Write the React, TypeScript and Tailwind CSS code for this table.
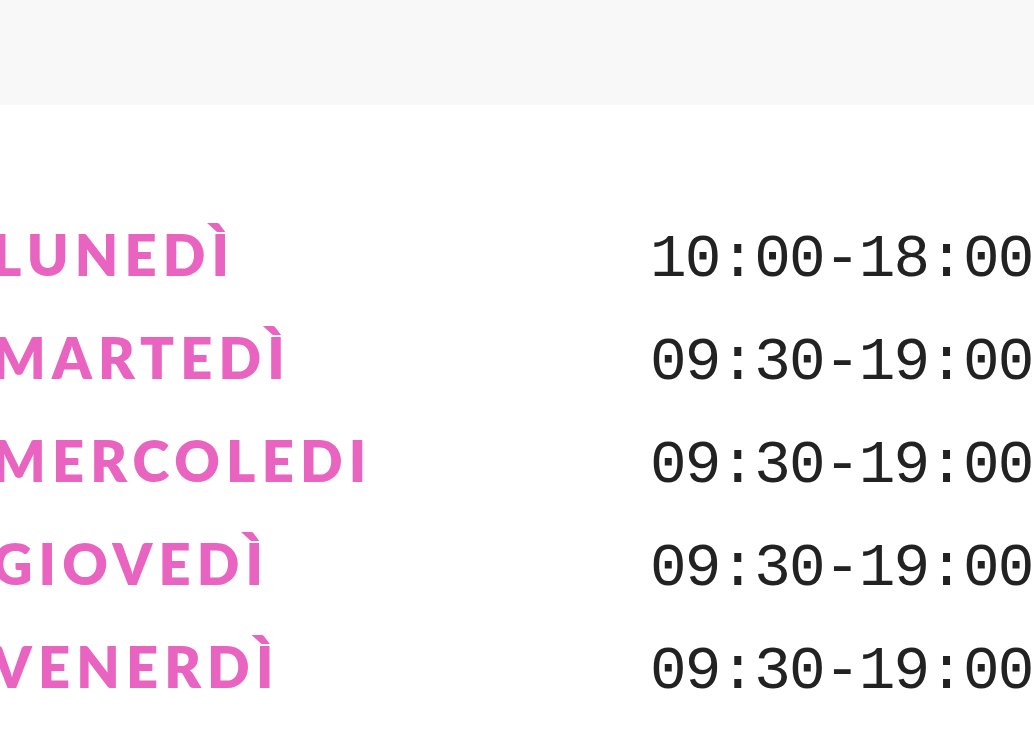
const hours = [
  { day: "LUNEDÌ", time: "10:00-18:00" },
  { day: "MARTEDÌ", time: "09:30-19:00" },
  { day: "MERCOLEDI", time: "09:30-19:00" },
  { day: "GIOVEDÌ", time: "09:30-19:00" },
  { day: "VENERDÌ", time: "09:30-19:00" },
  { day: "SABATO", time: "09:30-19:00" }
];

export default function App() {
  return (
    <main className="h-[742px] w-[1034px] overflow-hidden bg-white">
      <div className="h-[105px] bg-[#f8f8f8]" />
      <ul className="-ml-[8px] pt-[98px]">
        {hours.map((row) => (
          <li key={row.day} className="flex h-[103px] items-baseline leading-[103px]">
            <span className="w-[658px] shrink-0 font-['Lato',sans-serif] text-[56px] font-extrabold tracking-[0.11em] text-[#e963c0]">
              {row.day}
            </span>
            <span className="whitespace-nowrap font-['Liberation_Mono',monospace] text-[61px] tracking-[-0.03em] text-[#222]">
              {row.time}
            </span>
          </li>
        ))}
      </ul>
    </main>
  );
}
